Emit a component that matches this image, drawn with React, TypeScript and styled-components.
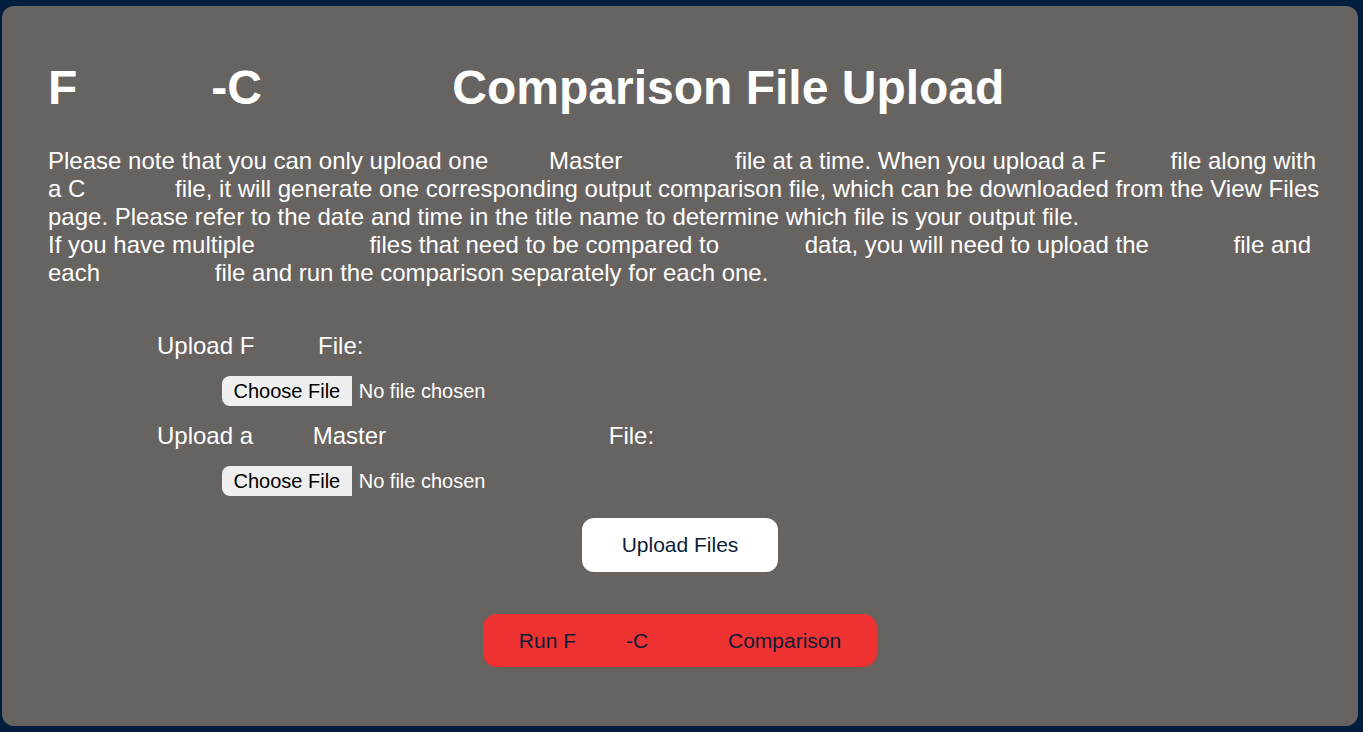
import React from "react";
import styled, { createGlobalStyle } from "styled-components";

const NAVY = "#021e3e";
const CARD = "#676361";
const RED = "#ee3131";
const INK = "#0c1d38";
const FONT = `"Liberation Sans", Arial, sans-serif`;

const GlobalStyle = createGlobalStyle`
  html, body {
    margin: 0;
    padding: 0;
    background: ${NAVY};
    font-family: ${FONT};
  }
`;

const Page = styled.div`
  box-sizing: border-box;
  height: 732px;
  padding: 6px 5px 6px 2px;
  background: ${NAVY};
`;

const Card = styled.main`
  box-sizing: border-box;
  height: 720px;
  padding: 54px 30px 0 46px;
  background: ${CARD};
  border-radius: 12px;
  color: #fff;
  display: flex;
  flex-direction: column;
`;

const Title = styled.h1`
  margin: 0 0 32px;
  font-size: 48px;
  font-weight: 700;
  white-space: nowrap;
`;

// blanked-out words in the reference keep their width
const Gap = styled.span<{ $w: number }>`
  display: inline-block;
  width: ${(p) => p.$w}px;
`;

const Intro = styled.p`
  margin: 0;
  font-size: 24px;
  line-height: normal;
`;

const Form = styled.form`
  margin-top: 45px;
  padding-left: 109px;
  display: flex;
  flex-direction: column;
  gap: 16px;
`;

const FieldLabel = styled.label`
  display: block;
  font-size: 24px;
  line-height: 28px;
  white-space: nowrap;
`;

const FileInput = styled.input.attrs({ type: "file" })`
  display: block;
  margin: 0 0 0 65px;
  height: 30px;
  font: 20px ${FONT};
  color: #fff;
  &::file-selector-button {
    height: 30px;
    margin: 0 7px 0 0;
    padding: 0 11.5px;
    border: none;
    border-radius: 8px 0 0 8px;
    background: #efefef;
    color: #000;
    font: 20px ${FONT};
  }
`;

const Actions = styled.div`
  margin-top: 22px;
  margin-left: -16px;
  display: flex;
  flex-direction: column;
  align-items: center;
  gap: 42px;
`;

const ActionButton = styled.button<{ $variant: "light" | "danger" }>`
  box-sizing: border-box;
  height: ${(p) => (p.$variant === "light" ? 54 : 53)}px;
  padding: 0 ${(p) => (p.$variant === "light" ? 40 : 36)}px;
  border: none;
  border-radius: ${(p) => (p.$variant === "light" ? 12 : 14)}px;
  background: ${(p) => (p.$variant === "light" ? "#fff" : RED)};
  color: ${INK};
  font: 21px ${FONT};
  white-space: nowrap;
  cursor: pointer;
`;

export default function App() {
  return (
    <>
      <GlobalStyle />
      <Page>
        <Card>
          <Title>
            F<Gap $w={134} />-C<Gap $w={177} /> Comparison File Upload
          </Title>
          <Intro>
            Please note that you can only upload one <Gap $w={54} />Master{" "}
            <Gap $w={106} />file at a time. When you upload a F<Gap $w={58} /> file
            along with a C<Gap $w={83} /> file, it will generate one corresponding
            output comparison file, which can be downloaded from the View Files
            page. Please refer to the date and time in the title name to determine
            which file is your output file.
            <br />
            If you have multiple <Gap $w={108} />files that need to be compared to{" "}
            <Gap $w={79} />data, you will need to upload the <Gap $w={78} />file and
            each <Gap $w={108} />file and run the comparison separately for each
            one.
          </Intro>
          <Form onSubmit={(e) => e.preventDefault()}>
            <FieldLabel htmlFor="first-file">
              Upload F<Gap $w={57} /> File:
            </FieldLabel>
            <FileInput id="first-file" />
            <FieldLabel htmlFor="master-file">
              Upload a <Gap $w={53} />Master<Gap $w={216} /> File:
            </FieldLabel>
            <FileInput id="master-file" />
          </Form>
          <Actions>
            <ActionButton $variant="light">Upload Files</ActionButton>
            <ActionButton $variant="danger">
              Run F<Gap $w={50} />-C<Gap $w={74} /> Comparison
            </ActionButton>
          </Actions>
        </Card>
      </Page>
    </>
  );
}
